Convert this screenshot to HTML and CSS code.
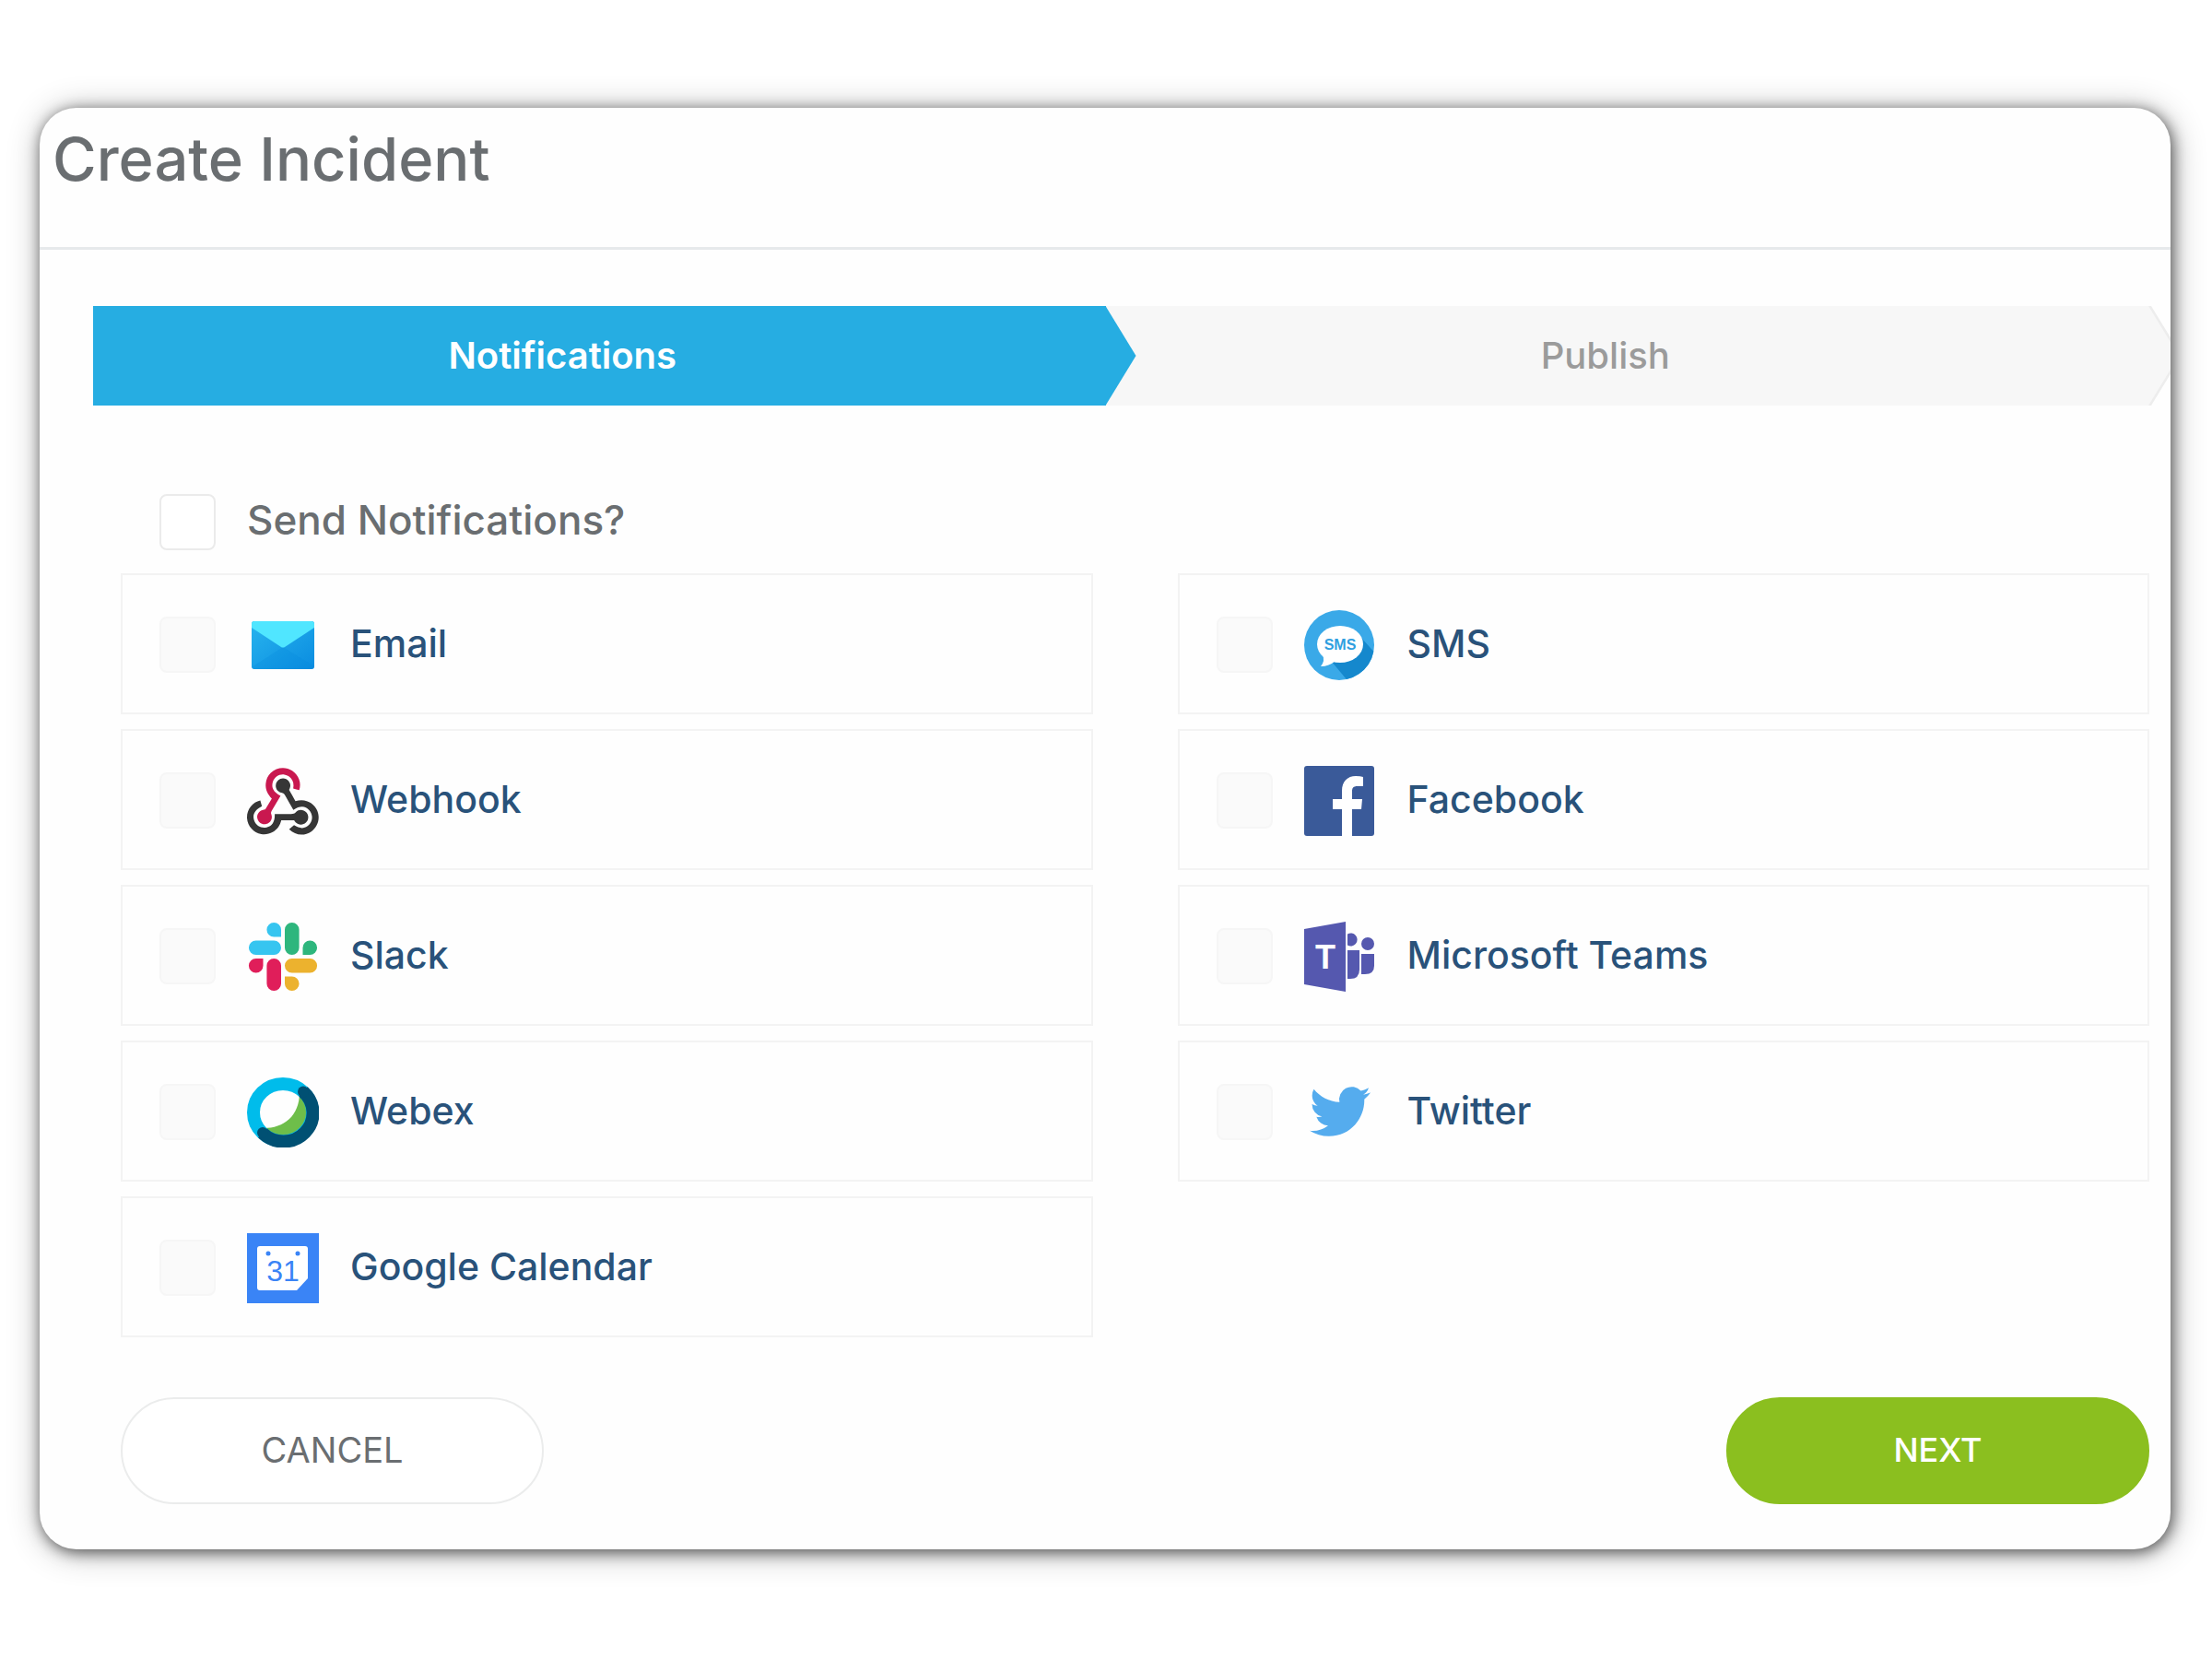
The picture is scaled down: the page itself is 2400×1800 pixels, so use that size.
FILE: index.html
```html
<!DOCTYPE html>
<html lang="en">
<head>
<meta charset="utf-8">
<title>Create Incident</title>
<link rel="stylesheet" href="styles.css">
</head>
<body>
<main class="dialog">
  <header class="dialog-header">
    <h1 class="dialog-title">Create Incident</h1>
  </header>

  <ol class="steps">
    <li class="step step-active" aria-current="step">Notifications</li>
    <li class="step">Publish</li>
  </ol>

  <form class="form">
    <label class="option option-all">
      <input class="check" type="checkbox" name="send">
      <span class="option-text option-all-text">Send Notifications?</span>
    </label>

    <div class="channels">
      <div class="column">
        <label class="option channel">
          <input class="check" type="checkbox" name="email" disabled>
          <svg class="icon" viewBox="0 0 78 76" aria-hidden="true">
            <defs>
              <linearGradient id="mail" x1="0" y1="0" x2="1" y2="1"><stop offset="0" stop-color="#28b4ee"/><stop offset="1" stop-color="#0a8ce0"/></linearGradient>
            </defs>
            <rect x="5" y="12" width="68" height="52" rx="3" fill="url(#mail)"/>
            <path d="M39 40 73 61Q73 64 70 64H8Q6 64 5 62Z" fill="#0588dc" opacity=".25"/>
            <path d="M8 12H70Q73 12 73 15V19L41 40Q39 41 37 40L5 19V15Q5 12 8 12Z" fill="#50e6ff"/>
          </svg>
          <span class="option-text">Email</span>
        </label>
        <label class="option channel">
          <input class="check" type="checkbox" name="webhook" disabled>
          <svg class="icon" viewBox="0 -6 256 249" aria-hidden="true">
            <path fill="#c9184f" d="M119.54 100.503c-10.61 17.836-20.775 35.108-31.152 52.25c-2.665 4.401-3.984 7.986-1.855 13.58c5.878 15.454-2.414 30.493-17.998 34.575c-14.697 3.851-29.016-5.808-31.932-21.543c-2.584-13.927 8.224-27.58 23.58-29.757c1.286-.184 2.6-.205 4.762-.367l23.358-39.168C73.612 95.465 64.868 78.39 66.803 57.23c1.368-14.957 7.25-27.883 18-38.477c20.59-20.288 52.002-23.573 76.246-8.001c23.284 14.958 33.948 44.094 24.858 69.031c-6.854-1.858-13.756-3.732-21.343-5.79c2.854-13.865.743-26.315-8.608-36.981c-6.178-7.042-14.106-10.733-23.12-12.093c-18.072-2.73-35.815 8.88-41.08 26.618c-5.976 20.13 3.069 36.575 27.784 48.967z"/>
            <path fill="#363636" d="M149.841 79.41c7.475 13.187 15.065 26.573 22.587 39.836c38.02-11.763 66.686 9.284 76.97 31.817c12.422 27.219 3.93 59.457-20.465 76.25c-25.04 17.238-56.707 14.293-78.892-7.851c5.654-4.733 11.336-9.487 17.407-14.566c21.912 14.192 41.077 13.524 55.305-3.282c12.133-14.337 11.87-35.714-.615-49.75c-14.408-16.197-33.707-16.691-57.035-1.143c-9.677-17.168-19.522-34.199-28.893-51.491c-3.16-5.828-6.648-9.21-13.77-10.443c-11.893-2.062-19.571-12.275-20.032-23.717c-.453-11.316 6.214-21.545 16.634-25.53c10.322-3.949 22.435-.762 29.378 8.014c5.674 7.17 7.477 15.24 4.491 24.083c-.83 2.466-1.905 4.852-3.07 7.774z"/>
            <path fill="#363636" d="M167.707 187.21h-45.77c-4.387 18.044-13.863 32.612-30.19 41.876c-12.693 7.2-26.373 9.641-40.933 7.29c-26.808-4.323-48.728-28.456-50.658-55.63c-2.184-30.784 18.975-58.147 47.178-64.293c1.947 7.071 3.915 14.21 5.862 21.264c-25.876 13.202-34.832 29.836-27.59 50.636c6.375 18.304 24.484 28.337 44.147 24.457c20.08-3.962 30.204-20.65 28.968-47.432c19.036 0 38.088-.197 57.126.097c7.434.117 13.173-.654 18.773-7.208c9.22-10.784 26.191-9.811 36.121.374c10.148 10.409 9.662 27.157-1.077 37.127c-10.361 9.62-26.73 9.106-36.424-1.26c-1.992-2.136-3.562-4.673-5.533-7.298z"/>
          </svg>
          <span class="option-text">Webhook</span>
        </label>
        <label class="option channel">
          <input class="check" type="checkbox" name="slack" disabled>
          <svg class="icon" viewBox="-0.6 -0.3 25.2 24.6" aria-hidden="true">
            <path fill="#e01e5a" d="M5.042 15.165a2.528 2.528 0 0 1-2.52 2.523A2.528 2.528 0 0 1 0 15.165a2.527 2.527 0 0 1 2.522-2.52h2.52v2.52zM6.313 15.165a2.527 2.527 0 0 1 2.521-2.52 2.527 2.527 0 0 1 2.521 2.52v6.313A2.528 2.528 0 0 1 8.834 24a2.528 2.528 0 0 1-2.521-2.522v-6.313z"/>
            <path fill="#36c5f0" d="M8.834 5.042a2.528 2.528 0 0 1-2.521-2.52A2.528 2.528 0 0 1 8.834 0a2.528 2.528 0 0 1 2.521 2.522v2.52H8.834zM8.834 6.313a2.528 2.528 0 0 1 2.521 2.521 2.528 2.528 0 0 1-2.521 2.521H2.522A2.528 2.528 0 0 1 0 8.834a2.528 2.528 0 0 1 2.522-2.521h6.312z"/>
            <path fill="#2eb67d" d="M18.956 8.834a2.528 2.528 0 0 1 2.522-2.521A2.528 2.528 0 0 1 24 8.834a2.528 2.528 0 0 1-2.522 2.521h-2.522V8.834zM17.688 8.834a2.528 2.528 0 0 1-2.523 2.521 2.527 2.527 0 0 1-2.52-2.521V2.522A2.527 2.527 0 0 1 15.165 0a2.528 2.528 0 0 1 2.523 2.522v6.312z"/>
            <path fill="#ecb22e" d="M15.165 18.956a2.528 2.528 0 0 1 2.523 2.522A2.528 2.528 0 0 1 15.165 24a2.527 2.527 0 0 1-2.52-2.522v-2.522h2.52zM15.165 17.688a2.527 2.527 0 0 1-2.52-2.523 2.526 2.526 0 0 1 2.52-2.52h6.313A2.527 2.527 0 0 1 24 15.165a2.528 2.528 0 0 1-2.522 2.523h-6.313z"/>
          </svg>
          <span class="option-text">Slack</span>
        </label>
        <label class="option channel">
          <input class="check" type="checkbox" name="webex" disabled>
          <svg class="icon" viewBox="0 0 78 76" aria-hidden="true">
            <path d="M57 16C57 42 40 55 18 55L30 68H60L70 50V20Z" fill="#6ebe4a"/>
            <ellipse cx="39" cy="38" rx="32" ry="31" fill="none" stroke="#00bceb" stroke-width="14"/>
            <path d="M61 15.500A32 31 0 1 1 17 60.500" fill="none" stroke="#005073" stroke-width="14"/>
            <circle cx="61" cy="15.500" r="6" fill="#005073"/>
            <circle cx="17" cy="60" r="6" fill="#005073"/>
          </svg>
          <span class="option-text">Webex</span>
        </label>
        <label class="option channel">
          <input class="check" type="checkbox" name="google-calendar" disabled>
          <svg class="icon" viewBox="0 0 78 76" aria-hidden="true">
            <rect width="78" height="76" fill="#3a84f6"/>
            <path d="M14 14H63Q66 14 66 17V49L54 62H14Q11 62 11 59V17Q11 14 14 14Z" fill="#fff"/>
            <circle cx="23" cy="22" r="2.500" fill="#3a84f6"/>
            <circle cx="55" cy="22" r="2.500" fill="#3a84f6"/>
            <text class="icon-day" x="39" y="52">31</text>
          </svg>
          <span class="option-text">Google Calendar</span>
        </label>
      </div>

      <div class="column">
        <label class="option channel">
          <input class="check" type="checkbox" name="sms" disabled>
          <svg class="icon" viewBox="0 0 78 76" aria-hidden="true">
            <defs><clipPath id="disc"><circle cx="38" cy="38" r="38"/></clipPath></defs>
            <g clip-path="url(#disc)">
              <rect width="78" height="76" fill="#3aa9e8"/>
              <path d="M62 30 80 50V80H50L30 56Z" fill="#1588cd"/>
            </g>
            <ellipse cx="39" cy="37" rx="25" ry="20" fill="#fff"/>
            <path d="M20 48Q23 55 18 61Q27 61 34 55Z" fill="#fff"/>
            <text class="icon-sms" x="39" y="43">SMS</text>
          </svg>
          <span class="option-text">SMS</span>
        </label>
        <label class="option channel">
          <input class="check" type="checkbox" name="facebook" disabled>
          <svg class="icon" viewBox="0 0 78 76" aria-hidden="true">
            <rect width="76" height="76" rx="3" fill="#3a5a99"/>
            <path d="M41 76V47H31V36H41V27C41 17 47 11 56 11Q61 11 64 12V22H58C53 22 52 24 52 28V36H63L62 47H52V76Z" fill="#fff"/>
          </svg>
          <span class="option-text">Facebook</span>
        </label>
        <label class="option channel">
          <input class="check" type="checkbox" name="teams" disabled>
          <svg class="icon" viewBox="0 0 78 76" aria-hidden="true">
            <g fill="#5558af">
              <path d="M0 8 45 0V76L0 68Z"/>
              <path d="M47 13.500A7 7 0 1 1 47 25.500Z"/>
              <circle cx="69" cy="24" r="7"/>
              <path d="M47 31H60V52Q60 62 50 62H47Z"/>
              <path d="M62 35H76V48Q76 57 66 57H62Z"/>
            </g>
            <text class="icon-teams" x="23" y="51">T</text>
          </svg>
          <span class="option-text">Microsoft Teams</span>
        </label>
        <label class="option channel">
          <input class="check" type="checkbox" name="twitter" disabled>
          <svg class="icon" viewBox="0 0 78 76" aria-hidden="true">
            <path transform="translate(6 4) scale(2.750)" fill="#55acee" d="M23.953 4.57a10 10 0 01-2.825.775 4.958 4.958 0 002.163-2.723c-.951.555-2.005.959-3.127 1.184a4.92 4.92 0 00-8.384 4.482C7.69 8.095 4.067 6.13 1.64 3.162a4.822 4.822 0 00-.666 2.475c0 1.71.87 3.213 2.188 4.096a4.904 4.904 0 01-2.228-.616v.06a4.923 4.923 0 003.946 4.827 4.996 4.996 0 01-2.212.085 4.936 4.936 0 004.604 3.417 9.867 9.867 0 01-6.102 2.105c-.39 0-.779-.023-1.17-.067a13.995 13.995 0 007.557 2.209c9.053 0 13.998-7.496 13.998-13.985 0-.21 0-.42-.015-.63A9.935 9.935 0 0024 4.59z"/>
          </svg>
          <span class="option-text">Twitter</span>
        </label>
      </div>
    </div>

    <div class="actions">
      <button class="button button-cancel" type="button">CANCEL</button>
      <button class="button button-next" type="submit">NEXT</button>
    </div>
  </form>
</main>
</body>
</html>
```
FILE: styles.css
```css
* {
  box-sizing: border-box;
}

body {
  margin: 0;
  padding: 117px 45px 119px 43px;
  background: #fff;
  color: #6a6e71;
  font-family: Inter, "Open Sans", sans-serif;
  font-size: 40px;
}

.dialog {
  overflow: hidden;
  border-radius: 40px;
  background: #fefefe;
  box-shadow: 2px 3px 16px rgba(0, 0, 0, 0.6), 2px 3px 36px rgba(0, 0, 0, 0.3);
}

.dialog-header {
  height: 154px;
  padding: 16px 14px 0;
  border-bottom: 3px solid #e6e9eb;
}

.dialog-title {
  margin: 0;
  font-size: 65px;
  font-weight: 500;
  line-height: 80px;
}

/* Progress steps */
.steps {
  display: grid;
  grid-template-columns: 1fr 1fr;
  gap: 33px;
  margin: 61px 24px 0 58px;
  padding: 0;
  background: #f7f7f7;
  list-style: none;
}

.step {
  position: relative;
  padding-right: 80px;
  color: #9b9b9b;
  font-weight: 500;
  line-height: 108px;
  text-align: center;
}

.step::before,
.step::after {
  content: "";
  position: absolute;
  top: 0;
  left: 100%;
  width: 33px;
  height: 100%;
  background: #f7f7f7;
  clip-path: polygon(0 0, 100% 50%, 0 100%);
}

.step::before {
  width: 36px;
  background: #ededed;
  clip-path: polygon(0 0, 3px 0, 100% 50%, 3px 100%, 0 100%);
}

.step-active,
.step-active::after {
  background: #26ade2;
}

.step-active::before {
  background: #f7f7f7;
}

.step-active {
  color: #fff;
  font-weight: 600;
}

/* Options */
.form {
  padding: 86px 23px 49px 88px;
}

.option {
  display: flex;
  align-items: center;
  padding-left: 40px;
}

.option-text {
  padding-bottom: 4px;
  font-size: 41px;
  font-weight: 500;
}

.option-all {
  height: 96px;
  padding-bottom: 16px;
  padding-left: 42px;
}

.option-all-text {
  margin-left: 34px;
  font-size: 44px;
}

.check {
  appearance: none;
  flex: none;
  width: 61px;
  height: 61px;
  margin: 0;
  border: 2px solid #ebebeb;
  border-radius: 8px;
  background: #fff;
}

.check:disabled {
  border-color: #f6f6f6;
  background: #fafafa;
}

.channels {
  display: grid;
  grid-template-columns: 1fr 1fr;
  gap: 92px;
}

.column {
  display: flex;
  flex-direction: column;
  gap: 16px;
}

.channel {
  height: 153px;
  padding-top: 2px;
  border: 2px solid #f3f3f3;
  color: #29527a;
}

.icon {
  flex: none;
  width: 78px;
  height: 76px;
  margin: 0 34px;
}

.icon-day,
.icon-sms,
.icon-teams {
  font-family: "Liberation Sans", sans-serif;
  text-anchor: middle;
}

.icon-day {
  fill: #3a84f6;
  font-size: 32px;
}

.icon-sms {
  fill: #2f9fe0;
  font-size: 16px;
  font-weight: 700;
}

.icon-teams {
  fill: #fff;
  font-size: 36px;
  font-weight: 700;
}

/* Footer buttons */
.actions {
  display: flex;
  justify-content: space-between;
  margin-top: 65px;
}

.button {
  width: 459px;
  height: 116px;
  padding-bottom: 4px;
  border: 2px solid #ebecec;
  border-radius: 58px;
  background: #fff;
  color: #6a6e71;
  font: inherit;
  font-size: 38px;
}

.button-next {
  border-color: #8bbf1f;
  background: #8bbf1f;
  color: #fff;
  font-size: 36px;
  font-weight: 500;
}
```
